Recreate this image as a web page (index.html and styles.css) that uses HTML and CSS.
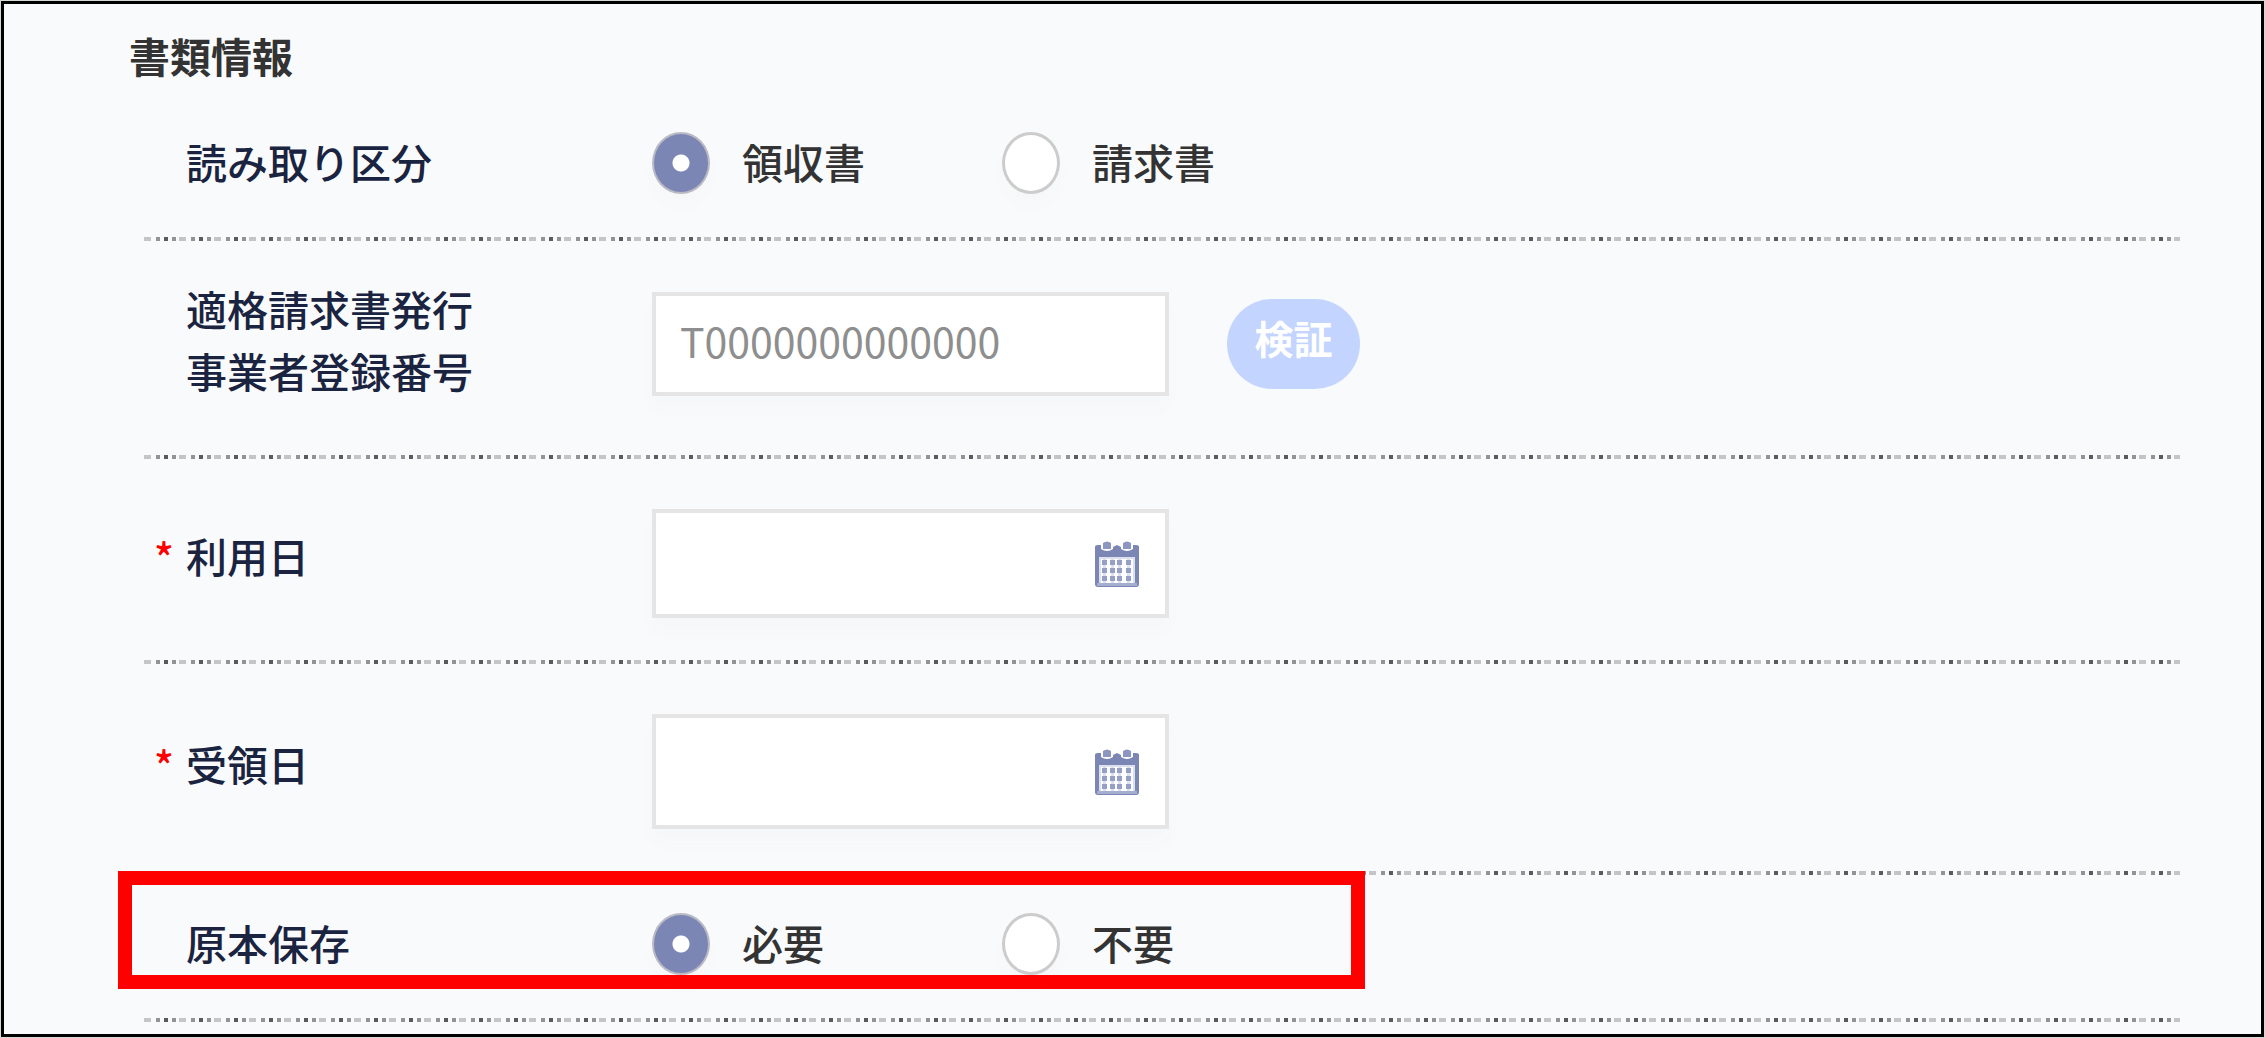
FILE: index.html
```html
<!DOCTYPE html>
<html lang="ja">
<head>
<meta charset="utf-8">
<meta name="viewport" content="width=device-width, initial-scale=1">
<title>書類情報</title>
<link rel="stylesheet" href="styles.css">
</head>
<body>
<form class="panel">
  <h1 class="panel-title">書類情報</h1>

  <div class="row" role="radiogroup" aria-labelledby="kind-label">
    <span class="label" id="kind-label">読み取り区分</span>
    <div class="control">
      <label class="option"><input class="radio" type="radio" name="kind" checked><span class="option-text">領収書</span></label>
      <label class="option"><input class="radio" type="radio" name="kind"><span class="option-text">請求書</span></label>
    </div>
  </div>

  <div class="row row-number">
    <label class="label" for="number">適格請求書発行<br>事業者登録番号</label>
    <div class="control">
      <input class="field field-number" id="number" type="text" placeholder="T0000000000000">
      <button class="verify" type="button">検証</button>
    </div>
  </div>

  <div class="row row-date">
    <span class="required">*</span>
    <label class="label label-raised" for="use-date">利用日</label>
    <div class="control">
      <div class="date">
        <input class="field field-use" id="use-date" type="text">
        <button class="calendar" type="button" aria-label="利用日を選択">
          <svg viewBox="0 0 44 46" width="44" height="46" aria-hidden="true">
            <path fill="#7b86b4" fill-rule="evenodd" d="M0 6Q0 4 3 4H6V8Q12 12 18 8V6L22 4L26 6V8Q32 12 38 8V4H41Q44 4 44 6V43Q44 46 41 46H3Q0 46 0 43ZM4 16V42H40V16Z"/>
            <path fill="#8c96c0" d="M8 2Q12-1 16 2V8H8ZM28 2Q32-1 36 2V8H28Z"/>
            <path fill="#a5add0" d="M2 42H42V45H2Z"/>
            <path fill="#dde0ee" d="M4 16H40V18H4ZM4 16H6V42H4ZM38 16H40V42H38ZM8 18H11V42H8ZM16 18H19V42H16ZM23 18H26V42H23ZM32 18H35V42H32Z"/>
            <path fill="#969fc8" d="M7 19H12V24H7ZM15 19H20V24H15ZM22 19H27V24H22ZM31 19H36V24H31ZM7 27H12V32H7ZM15 27H20V32H15ZM22 27H27V32H22ZM31 27H36V32H31ZM7 35H12V40H7ZM15 35H20V40H15ZM22 35H27V40H22ZM31 35H36V40H31Z"/>
          </svg>
        </button>
      </div>
    </div>
  </div>

  <div class="row row-date">
    <span class="required">*</span>
    <label class="label label-raised" for="receipt-date">受領日</label>
    <div class="control">
      <div class="date">
        <input class="field field-receipt" id="receipt-date" type="text">
        <button class="calendar" type="button" aria-label="受領日を選択">
          <svg viewBox="0 0 44 46" width="44" height="46" aria-hidden="true">
            <path fill="#7b86b4" fill-rule="evenodd" d="M0 6Q0 4 3 4H6V8Q12 12 18 8V6L22 4L26 6V8Q32 12 38 8V4H41Q44 4 44 6V43Q44 46 41 46H3Q0 46 0 43ZM4 16V42H40V16Z"/>
            <path fill="#8c96c0" d="M8 2Q12-1 16 2V8H8ZM28 2Q32-1 36 2V8H28Z"/>
            <path fill="#a5add0" d="M2 42H42V45H2Z"/>
            <path fill="#dde0ee" d="M4 16H40V18H4ZM4 16H6V42H4ZM38 16H40V42H38ZM8 18H11V42H8ZM16 18H19V42H16ZM23 18H26V42H23ZM32 18H35V42H32Z"/>
            <path fill="#969fc8" d="M7 19H12V24H7ZM15 19H20V24H15ZM22 19H27V24H22ZM31 19H36V24H31ZM7 27H12V32H7ZM15 27H20V32H15ZM22 27H27V32H22ZM31 27H36V32H31ZM7 35H12V40H7ZM15 35H20V40H15ZM22 35H27V40H22ZM31 35H36V40H31Z"/>
          </svg>
        </button>
      </div>
    </div>
  </div>

  <div class="row row-original" role="radiogroup" aria-labelledby="original-label">
    <span class="label" id="original-label">原本保存</span>
    <div class="control">
      <label class="option"><input class="radio" type="radio" name="original" checked><span class="option-text">必要</span></label>
      <label class="option"><input class="radio" type="radio" name="original"><span class="option-text">不要</span></label>
    </div>
    <div class="highlight"></div>
  </div>
</form>
</body>
</html>
```
FILE: styles.css
```css
* {
  box-sizing: border-box;
}

body {
  display: flex;
  min-height: 100vh;
  margin: 0;
  padding: 1px;
  background: #d5dad7;
  color: #333;
  font-family: "Noto Sans CJK JP", "Noto Sans", sans-serif;
  font-size: 41px;
  font-weight: 500;
  line-height: 62px;
}

input,
button {
  margin: 0;
  font: inherit;
}

.panel {
  flex: 1;
  padding: 20px 81px 0 125px;
  border: 3px solid #000;
  background: #f9fafc;
}

.panel-title {
  margin: 0;
  font-size: 41px;
  font-weight: 700;
}

/* Each row ends in a dotted rule, drawn as a repeating 35px pattern. */
.row {
  position: relative;
  display: grid;
  grid-template-columns: 42px 466px 1fr;
  align-items: center;
  margin-left: 15px;
  padding: 44px 0 45px;
  background: repeating-linear-gradient(
      90deg,
      #c4c5c7 0 7px, transparent 7px 12px,
      #929395 12px 16px, transparent 16px 20px,
      #5a5a5c 20px 24px, transparent 24px 28px,
      #929395 28px 32px, transparent 32px 35px
    ) left bottom / 100% 4px no-repeat;
}

.row-number {
  padding: 36px 0 54px;
}

.row-date {
  padding: 50px 0 46px;
}

.row-original {
  padding-top: 36px;
}

.required {
  grid-column: 1;
  padding: 0 0 16px 10px;
  color: #f00;
}

.label {
  grid-column: 2;
  padding-bottom: 4px;
  color: #1a2440;
}

.label-raised {
  padding-bottom: 18px;
}

.control {
  grid-column: 3;
  display: flex;
  align-items: center;
}

.row-number .control {
  padding-top: 6px;
}

.option {
  display: flex;
  align-items: center;
  gap: 32px;
  width: 350px;
}

.option-text {
  padding-bottom: 4px;
}

.radio {
  appearance: none;
  width: 58px;
  height: 62px;
  border: 3px solid #ccc;
  border-radius: 50%;
  background: #fff;
  box-shadow: 0 12px 16px rgba(120, 80, 0, 0.02);
}

.radio:checked {
  border: 2px solid #b9bac4;
  background: radial-gradient(circle, #fff 8px, #7b86b4 9px);
}

.field {
  width: 517px;
  height: 104px;
  padding: 0 24px;
  border: 4px solid #e5e5e5;
  border-radius: 0;
  background: #fff;
  color: #333;
  font-weight: 400;
  box-shadow: 0 14px 16px rgba(120, 80, 0, 0.02);
}

.field::placeholder {
  color: #8e8e8e;
  opacity: 1;
}

.field-number {
  padding-bottom: 8px;
}

.field-use {
  height: 109px;
}

.field-receipt {
  height: 115px;
}

.verify {
  width: 133px;
  height: 90px;
  margin-left: 58px;
  padding: 0 0 14px;
  border: 0;
  border-radius: 45px;
  background: #c3d5fe;
  color: #fff;
  font-size: 39px;
  font-weight: 700;
}

.date {
  position: relative;
  display: flex;
}

.calendar {
  position: absolute;
  top: 0;
  right: 30px;
  bottom: 0;
  display: flex;
  align-items: center;
  padding: 0;
  border: 0;
  background: none;
}

/* Red frame that calls out the row below the last date. */
.highlight {
  position: absolute;
  top: -4px;
  bottom: 33px;
  left: -26px;
  width: 1247px;
  border: 14px solid #f00;
  pointer-events: none;
}
```
